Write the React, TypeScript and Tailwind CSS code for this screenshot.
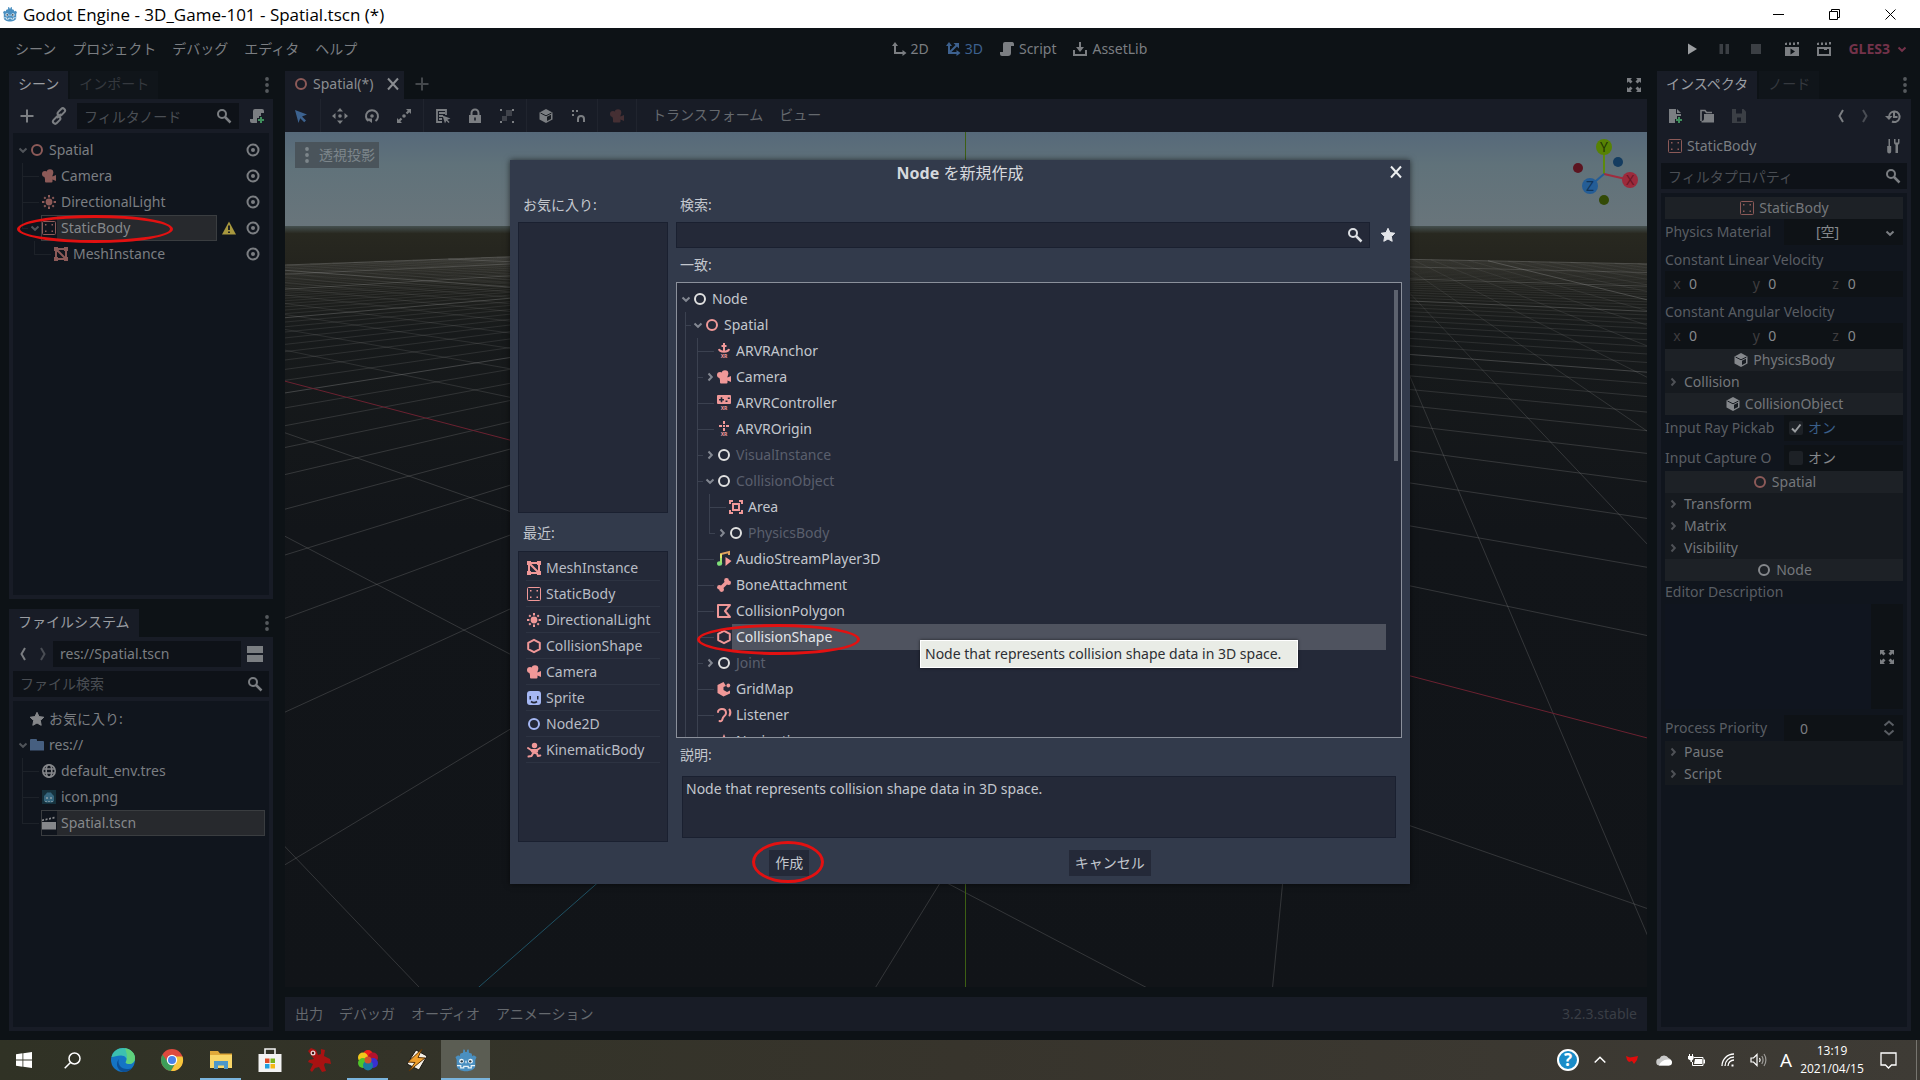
import React, { useState } from 'react';

// ================== Icons ==================
type IconProps = { name: string; className?: string; size?: number };

const glyphs: Record<string, React.ReactNode> = {
    ring: <circle cx="8" cy="8" r="5" fill="none" stroke="currentColor" strokeWidth="2" />,
    camera: (
        <g fill="currentColor">
            <circle cx="9" cy="4.5" r="3.3" />
            <circle cx="4" cy="6" r="3" />
            <path d="M2.5 6h9v2.6L15 7v6l-3.5-1.6v2.1a1 1 0 0 1-1 1H5a1 1 0 0 1-1-1V11z" />
        </g>
    ),
    light: (
        <g fill="currentColor" stroke="currentColor" strokeWidth="2">
            <circle cx="8" cy="8" r="2.4" />
            <path d="M8 1v2.4M8 12.6V15M1 8h2.4M12.6 8H15M3.2 3.2l1.4 1.4M11.4 11.4l1.4 1.4M3.2 12.8l1.4-1.4M11.4 4.6l1.4-1.4" />
        </g>
    ),
    staticbody: (
        <g fill="currentColor">
            <rect x="1.5" y="1.5" width="13" height="13" rx="1" fill="none" stroke="currentColor" />
            <path d="M4 4h1.5v1.5H4zM10.5 4H12v1.5h-1.5zM4 10.5h1.5V12H4zM10.5 10.5H12V12h-1.5z" />
        </g>
    ),
    mesh: (
        <g fill="none" stroke="currentColor">
            <path d="M3 3h10v10H3zM3 3l10 10" strokeWidth="2" />
            <path d="M1 1h4v4H1zM11 1h4v4h-4zM1 11h4v4H1zM11 11h4v4h-4z" fill="currentColor" stroke="none" />
        </g>
    ),
    hexagon: <path d="M8 1.8l5.8 3.1v6.2L8 14.2l-5.8-3.1V4.9z" fill="none" stroke="currentColor" strokeWidth="2" strokeLinejoin="round" />,
    sprite: (
        <g>
            <rect x="1" y="1" width="14" height="14" rx="3" fill="currentColor" />
            <path d="M3.5 6H5v3.5H3.5zM11 6h1.5v3.5H11z" fill="#242938" />
            <path d="M5 11.5c2 1.5 4 1.5 6 0" fill="none" stroke="#242938" strokeWidth="1.6" />
        </g>
    ),
    kinematic: (
        <g fill="none" stroke="currentColor" strokeWidth="2" strokeLinecap="round" strokeLinejoin="round">
            <circle cx="8.5" cy="3.5" r="2.7" fill="currentColor" stroke="none" />
            <path d="M2 6l3 2h6l3-2M2.5 14.5l3-.5 2-3.5 3.5 1 .8 2.5 2.5-.5" />
            <path d="M6.5 9h4" strokeWidth="3.5" />
        </g>
    ),
    anchor: <path d="M8 0v9M5.500 3h5M3 6c.5 3.500 9.500 3.500 10 0" fill="none" stroke="currentColor" strokeWidth="2" />,
    pad: (
        <g>
            <rect x="1" y="0" width="14" height="9" rx="1" fill="currentColor" />
            <path d="M3 4h5v1.5H3zM4.7 2.3h1.6v5H4.7zM9.5 5.5h2V7h-2zM11.8 2.5h2V4h-2z" fill="#242938" />
        </g>
    ),
    origin: <path d="M8 0v3M8 7v3M3 5h3M10 5h3M7 5h2" fill="none" stroke="currentColor" strokeWidth="2" />,
    area: (
        <g fill="none" stroke="currentColor" strokeWidth="2">
            <path d="M5 5h6v6H5z" />
            <path d="M2 5V2h3M11 2h3v3M14 11v3h-3M5 14H2v-3" />
        </g>
    ),
    audio: (
        <g>
            <path d="M5 12V3l8-2v3" fill="none" stroke="#e0a15e" strokeWidth="2" />
            <path d="M5 7V3" stroke="#e2e06a" strokeWidth="2" />
            <ellipse cx="3.6" cy="12.5" rx="2.6" ry="2.3" fill="#7fe07a" />
            <path d="M5 7v5" stroke="#9fe070" strokeWidth="2" />
            <path d="M9.5 6l6 4-6 5z" fill="#fc9c9c" />
        </g>
    ),
    bone: (
        <g fill="currentColor">
            <circle cx="10.5" cy="3.5" r="2.4" />
            <circle cx="12.7" cy="5.8" r="2.3" />
            <circle cx="3.4" cy="10.2" r="2.3" />
            <circle cx="5.6" cy="12.6" r="2.4" />
            <path d="M4 12l8-8" stroke="currentColor" strokeWidth="3.6" />
        </g>
    ),
    polygon: <path d="M2 2h12L9 8l5 6H2z" fill="none" stroke="currentColor" strokeWidth="2" strokeLinejoin="round" />,
    gridmap: (
        <g fill="currentColor">
            <path d="M7.5 1l-6 3v8l6 3.5 6.5-3v-3L11 11 7.5 9V6L10 5z" />
            <circle cx="12.3" cy="4.5" r="1.9" />
        </g>
    ),
    listener: (
        <g fill="none" stroke="currentColor" strokeWidth="2" strokeLinecap="round">
            <path d="M2 5c0-4 8-4.500 8 1 0 3-3 3-3.500 6-.3 2-1.500 2.500-3 2" />
            <path d="M13.5 2.5c1.200 2 1.200 4 0 6" />
        </g>
    ),
    nav: <path d="M8 1l6 14-6-3-6 3z" fill="currentColor" />,
    cube: (
        <g>
            <path d="M8 1l6.500 3.400v7.200L8 15l-6.500-3.400V4.400z" fill="currentColor" />
            <path d="M9 8.800l4-2.100v4.300l-4 2.100z" fill="#181c22" />
            <path d="M2.5 5L8 7.800 13.500 5" fill="none" stroke="#181c22" />
        </g>
    ),
    search: (
        <g fill="none" stroke="currentColor">
            <circle cx="6" cy="6" r="4" strokeWidth="2" />
            <path d="M9 9l5.5 5.5" strokeWidth="2.5" />
        </g>
    ),
    star: <path d="M8 1.300l2 4.300 4.800.6-3.500 3.300.9 4.800L8 12l-4.200 2.300.9-4.800L1.200 6.200 6 5.600z" fill="currentColor" stroke="currentColor" strokeLinejoin="round" />,
    plus: <path d="M8 1.5v13M1.5 8h13" stroke="currentColor" strokeWidth="2" />,
    cross: <path d="M3 2.5l10 11M13 2.5l-10 11" stroke="currentColor" strokeWidth="2" />,
    link: (
        <g fill="none" stroke="currentColor" strokeWidth="2">
            <rect x="8" y="-.5" width="4.5" height="8.5" rx="2.2" transform="rotate(45 10 4)" />
            <rect x="3.5" y="8" width="4.5" height="8.5" rx="2.2" transform="rotate(45 6 12)" />
            <path d="M6 10l4-4" />
        </g>
    ),
    script: <path d="M6 1h7.500A2 2 0 0 1 15 3v2h-3v7a3 3 0 0 1-3 3H3a2 2 0 0 1-2-2v-2h3V3a2 2 0 0 1 2-2z" fill="currentColor" />,
    scriptadd: (
        <g>
            <path d="M6 1h7a2 2 0 0 1 2 2v2h-3v3h-2v2H8v5H3a2 2 0 0 1-2-2v-2h3V3a2 2 0 0 1 2-2z" fill="currentColor" />
            <path d="M12 9v6M9 12h6" stroke="#3f8f5c" strokeWidth="2" />
        </g>
    ),
    eye: (
        <g fill="none" stroke="currentColor">
            <circle cx="8" cy="8" r="5.5" strokeWidth="2" />
            <circle cx="8" cy="8" r="2" fill="currentColor" stroke="none" />
        </g>
    ),
    warning: (
        <g>
            <path d="M8 1.5l7 13H1z" fill="#a8983e" />
            <path d="M8 5.500V10M8 11.500v1.600" stroke="#14181f" strokeWidth="1.800" />
        </g>
    ),
    down: <path d="M4.5 6.5L8 9.800l3.500-3.300" fill="none" stroke="currentColor" strokeWidth="2" />,
    right: <path d="M6.5 4.5L9.800 8l-3.300 3.500" fill="none" stroke="currentColor" strokeWidth="2" />,
    back: <path d="M10 2L6.500 8l3.500 6" fill="none" stroke="currentColor" strokeWidth="2" />,
    forward: <path d="M6 2l3.500 6L6 14" fill="none" stroke="currentColor" strokeWidth="2" />,
    updown: <path d="M3.500 5.500L8 1.500l4.500 4M3.500 10.500l4.500 4 4.500-4" fill="none" stroke="currentColor" strokeWidth="2" />,
    split: <path d="M0 0h16v7H0zM0 9h16v7H0z" fill="currentColor" />,
    folder: <path d="M1 3a1 1 0 0 1 1-1h5a1 1 0 0 1 1 1v1h6a1 1 0 0 1 1 1v8.500H1z" fill="currentColor" />,
    globe: (
        <g fill="none" stroke="currentColor" strokeWidth="1.6">
            <circle cx="8" cy="8" r="6.2" />
            <ellipse cx="8" cy="8" rx="2.8" ry="6.2" />
            <path d="M2 6h12M2 10h12" />
        </g>
    ),
    clapper: (
        <g fill="currentColor">
            <path d="M1 7h14v7.500H1z" />
            <path d="M1 4.500l2-.5v1.800l-2 .4zM4.500 3.700l2-.4v1.800l-2 .4zM8 2.900l2-.4v1.800l-2 .4zM11.500 2.100l2-.4v1.800l-2 .4z" />
        </g>
    ),
    playscene: (
        <g>
            <path d="M1 2l2-.5V4H1zM5 1.500h2V4H5zM9 1.500h2V4H9zM13 1h2v2.500h-2zM1 6h14v9H1z" fill="currentColor" />
            <path d="M6.500 7.500v6l4.500-3z" fill="#0d1216" />
        </g>
    ),
    playcustom: (
        <g>
            <path d="M1 2l2-.5V4H1zM5 1.500h2V4H5zM9 1.500h2V4H9zM13 1h2v2.500h-2z" fill="currentColor" />
            <path d="M2 7h12v7H2z" fill="none" stroke="currentColor" strokeWidth="2" />
            <path d="M8 7h3v2H8z" fill="currentColor" />
        </g>
    ),
    twod: (
        <g fill="none" stroke="currentColor" strokeWidth="2">
            <path d="M4 4v8h9" />
            <path d="M1 5l3-4 3 4zM11.500 9l4 3-4 3z" fill="currentColor" stroke="none" />
        </g>
    ),
    threed: (
        <g fill="none" stroke="currentColor" strokeWidth="2">
            <path d="M4 4v8h9M4 12l8-8" />
            <path d="M1 5l3-4 3 4zM11.500 9l4 3-4 3zM8.500 2H14v5.500z" fill="currentColor" stroke="none" />
        </g>
    ),
    assetlib: (
        <g fill="none" stroke="currentColor" strokeWidth="2">
            <path d="M2 9v5h12V9M8 1v6" />
            <path d="M4 6h8l-4 5z" fill="currentColor" stroke="none" />
        </g>
    ),
    play: <path d="M4 2.500v11l9-5.500z" fill="currentColor" />,
    pause: <path d="M3.500 3H7v10H3.500zM9.500 3H13v10H9.500z" fill="currentColor" />,
    stop: <path d="M3 3h10v10H3z" fill="currentColor" />,
    select: <path d="M2 2l12 4.500-5 2 4 4-1.800 1.800-4-4L5.500 15z" fill="currentColor" />,
    move: (
        <g fill="currentColor">
            <circle cx="8" cy="8" r="1.8" />
            <path d="M8 0l3 3.500H5zM8 16l3-3.500H5zM0 8l3.500-3v6zM16 8l-3.500-3v6z" />
        </g>
    ),
    rotate: (
        <g fill="none" stroke="currentColor" strokeWidth="2">
            <path d="M4.500 13A6 6 0 1 1 11.500 13" />
            <circle cx="8" cy="8" r="1.8" fill="currentColor" stroke="none" />
            <path d="M1.500 10.500H8V15z" fill="currentColor" stroke="none" />
        </g>
    ),
    scale: (
        <g fill="currentColor">
            <circle cx="8" cy="8" r="1.8" />
            <path d="M10 1h5v5l-1.700-1.700-2 2-1.600-1.600 2-2zM6 15H1v-5l1.700 1.700 2-2 1.600 1.600-2 2z" />
        </g>
    ),
    listselect: (
        <g fill="none" stroke="currentColor" strokeWidth="1.8">
            <path d="M11 7V2H2v12h5M4 5h6M4 8h4M4 11h3" />
            <path d="M7.500 7.500l8 3-3.200 1.300 2.300 2.300-1 1-2.300-2.300L10 15.500z" fill="currentColor" stroke="none" />
        </g>
    ),
    lock: (
        <g>
            <path d="M4.500 8V5a3.500 3.500 0 0 1 7 0v3" fill="none" stroke="currentColor" strokeWidth="2" />
            <path d="M2 7h12v8H2z" fill="currentColor" />
            <path d="M7.200 9.500h1.600v3H7.200z" fill="#181c26" />
        </g>
    ),
    group: (
        <g fill="currentColor">
            <path d="M1 1h2v2H1zM13 1h2v2h-2zM1 13h2v2H1zM13 13h2v2h-2z" />
            <path d="M7 2h6v6H7zM3 8h5v5H3z" opacity=".4" />
        </g>
    ),
    snap: (
        <g fill="currentColor">
            <path d="M2 2h2v2H2zM2 6h2v2H2zM6 2h2v2H6z" />
            <path d="M8 14v-3a3 3 0 0 1 6 0v3" fill="none" stroke="currentColor" strokeWidth="2" />
        </g>
    ),
    expand: (
        <path d="M1 1h5L4.500 2.500l2 2-2 2-2-2L1 6zM15 1h-5l1.500 1.500-2 2 2 2 2-2L15 6zM1 15h5l-1.500-1.500 2-2-2-2-2 2L1 10zM15 15h-5l1.500-1.500-2-2 2-2 2 2L15 10z" fill="currentColor" />
    ),
    newfile: (
        <g>
            <path d="M2 1h7v5h5v2h-4v3H8v4H2zM10 1l4 4h-4z" fill="currentColor" />
            <path d="M12 9v6M9 12h6" stroke="#3f8f5c" strokeWidth="2" />
        </g>
    ),
    open: (
        <g>
            <path d="M2 13V2.500h4l1.500 2H13" fill="none" stroke="currentColor" strokeWidth="1.6" />
            <path d="M5 6h10v8.500H2.500V13C4.500 13 5 12 5 10z" fill="currentColor" />
        </g>
    ),
    save: (
        <g>
            <path d="M1 1h11.500L15 3.500V15H1z" fill="currentColor" />
            <path d="M5 1h6v4.500H5zM6 9.500h4v4H6z" fill="#181c26" />
        </g>
    ),
    history: (
        <g fill="none" stroke="currentColor" strokeWidth="2">
            <path d="M4 9a5.300 5.300 0 1 1 3 4.500M9 4.500V9h3.500" />
            <path d="M0 8h7.500L4 12z" fill="currentColor" stroke="none" />
        </g>
    ),
    tools: (
        <g fill="currentColor">
            <path d="M3.500 1H5v7h1.200v5.500a1.800 1.800 0 0 1-4 0V8h1.300z" />
            <path d="M9 1v3.500a2.500 2.500 0 0 0 1.500 2.300V15H13V6.800a2.500 2.500 0 0 0 1.500-2.300V1H13v3.500h-2.500V1z" />
        </g>
    ),
    kebab: (
        <g fill="currentColor">
            <circle cx="8" cy="2" r="1.9" />
            <circle cx="8" cy="8" r="1.9" />
            <circle cx="8" cy="14" r="1.9" />
        </g>
    ),
    godot: (
        <g>
            <path d="M1 6l1.800-1.200.9.700.6-1.800L6 3.200 6.200 1l1 .2.300 1.400h1l.3-1.400 1-.2.200 2.200 1.700.5.600 1.800.9-.7L15 6l-.8 2v4c0 2-3 3.500-6.200 3.500S1.800 14 1.800 12V8z" fill="#4a8fc0" />
            <circle cx="5" cy="8.800" r="1.600" fill="#e8f2f8" />
            <circle cx="11" cy="8.800" r="1.600" fill="#e8f2f8" />
            <circle cx="5.200" cy="8.900" r=".8" fill="#2c3a46" />
            <circle cx="10.800" cy="8.900" r=".8" fill="#2c3a46" />
            <path d="M2 11.800h2.500v1.400h2v-1h3v1h2v-1.400H14M8 8.500v1.600" fill="none" stroke="#e8f2f8" strokeWidth=".8" />
        </g>
    ),
    image: (
        <g>
            <path d="M1 1h14v14H1z" fill="#16313c" />
            <path d="M3 7l2-2 1-1.500h4L11 5l2 2v5l-2 1.500H5L3 12z" fill="#35667e" />
            <path d="M5 8h2v2H5zM9 8h2v2H9zM4 12h2v1H4zM7 12h2v1H7zM10 12h2v1h-2z" fill="#76909c" />
        </g>
    ),
};

const Icon = ({ name, className = '', size = 16 }: IconProps) => (
    <svg viewBox="0 0 16 16" width={size} height={size} className={`shrink-0 overflow-visible ${className}`} aria-hidden="true">
        {glyphs[name]}
        {['anchor', 'pad', 'origin'].includes(name) && (
            <text x="8" y="15" textAnchor="middle" fontSize="5" fontWeight="bold" fill="currentColor">XR</text>
        )}
    </svg>
);

const IconButton = ({ name, label, className = '' }: { name: string; label: string; className?: string }) => (
    <button type="button" aria-label={label} className={`flex h-full shrink-0 items-center justify-center ${className}`}>
        <Icon name={name} />
    </button>
);

// ================== Tree ==================
// guides: one letter per level, "|" = pass through, "t" = branch, "l" = last branch, "." = nothing
type Row = {
    label: string;
    icon: string;
    color?: string;
    guides?: string;
    arrow?: 'down' | 'right';
    muted?: boolean;
    warning?: boolean;
    circled?: string;
};

type TreeRowProps = Row & {
    line: string;
    selected?: boolean;
    outline?: string;
    highlight: string;
    onSelect: () => void;
    children?: React.ReactNode;
};

const TreeRow = ({ label, icon, color = '', guides = '', arrow, muted, circled, line, selected, outline = '', highlight, onSelect, children }: TreeRowProps) => (
    <li className="relative flex h-[26px] items-center">
        {guides.split('').map((g, i) => (
            <span key={i} className="relative h-full w-3 shrink-0">
                {g !== '.' && <span className={`absolute left-[5px] top-0 w-px ${line} ${g === 'l' ? 'h-1/2' : 'h-full'}`} />}
                {(g === 't' || g === 'l') && <span className={`absolute left-[5px] top-1/2 h-px ${line} ${arrow ? 'w-[6px]' : 'w-[17px]'}`} />}
            </span>
        ))}
        <span className="flex w-3 shrink-0 justify-center opacity-60">{arrow && <Icon name={arrow} />}</span>
        <button type="button" onClick={onSelect} className={`flex h-full min-w-0 flex-1 items-center text-left ${selected ? outline : ''}`}>
            <Icon name={icon} className={color} />
            <span className={`flex h-full flex-1 items-center whitespace-nowrap pl-1 ${muted ? 'text-[#5a5f6d]' : ''} ${selected ? highlight : ''}`}>{label}</span>
        </button>
        {children}
        {circled && <span className={`pointer-events-none absolute z-10 rounded-[50%] border-[3px] border-[#e31111] ${circled}`} />}
    </li>
);

const dockRow = {
    line: 'bg-[#1d2229]',
    outline: 'outline -outline-offset-1 outline-[#3a3d40]',
    highlight: 'bg-[#27292d] text-[#85888b]',
};

const sceneRows: Row[] = [
    { label: 'Spatial', icon: 'ring', color: 'text-[#8c5a58]', arrow: 'down' },
    { label: 'Camera', icon: 'camera', color: 'text-[#8c5a58]', guides: 't' },
    { label: 'DirectionalLight', icon: 'light', color: 'text-[#8c5a58]', guides: 't' },
    { label: 'StaticBody', icon: 'staticbody', color: 'text-[#8c5a58]', guides: 'l', arrow: 'down', warning: true, circled: 'left-0 top-0 h-7 w-[156px]' },
    { label: 'MeshInstance', icon: 'mesh', color: 'text-[#8c5a58]', guides: '.l' },
];

const fileRows: Row[] = [
    { label: 'お気に入り:', icon: 'star', color: 'text-[#85878a]' },
    { label: 'res://', icon: 'folder', color: 'text-[#465f80]', arrow: 'down' },
    { label: 'default_env.tres', icon: 'globe', color: 'text-[#85878a]', guides: 't' },
    { label: 'icon.png', icon: 'image', guides: 't' },
    { label: 'Spatial.tscn', icon: 'clapper', color: 'text-[#85878a]', guides: 'l' },
];

const nodeRows: Row[] = [
    { label: 'Node', icon: 'ring', color: 'text-[#e0e0e0]', arrow: 'down' },
    { label: 'Spatial', icon: 'ring', arrow: 'down', guides: 't' },
    { label: 'ARVRAnchor', icon: 'anchor', guides: '|t' },
    { label: 'Camera', icon: 'camera', arrow: 'right', guides: '|t' },
    { label: 'ARVRController', icon: 'pad', guides: '|t' },
    { label: 'ARVROrigin', icon: 'origin', guides: '|t' },
    { label: 'VisualInstance', icon: 'ring', color: 'text-[#e0e0e0]', arrow: 'right', guides: '|t', muted: true },
    { label: 'CollisionObject', icon: 'ring', color: 'text-[#e0e0e0]', arrow: 'down', guides: '|t', muted: true },
    { label: 'Area', icon: 'area', guides: '||t' },
    { label: 'PhysicsBody', icon: 'ring', color: 'text-[#e0e0e0]', arrow: 'right', guides: '||l', muted: true },
    { label: 'AudioStreamPlayer3D', icon: 'audio', guides: '|t' },
    { label: 'BoneAttachment', icon: 'bone', guides: '|t' },
    { label: 'CollisionPolygon', icon: 'polygon', guides: '|t' },
    { label: 'CollisionShape', icon: 'hexagon', guides: '|t', circled: 'left-[17px] top-0 h-[31px] w-[163px]' },
    { label: 'Joint', icon: 'ring', color: 'text-[#e0e0e0]', arrow: 'right', guides: '|t', muted: true },
    { label: 'GridMap', icon: 'gridmap', guides: '|t' },
    { label: 'Listener', icon: 'listener', guides: '|t' },
    { label: 'Navigation', icon: 'nav', guides: '|t' },
];

const recentRows: Row[] = [
    { label: 'MeshInstance', icon: 'mesh' },
    { label: 'StaticBody', icon: 'staticbody' },
    { label: 'DirectionalLight', icon: 'light' },
    { label: 'CollisionShape', icon: 'hexagon' },
    { label: 'Camera', icon: 'camera' },
    { label: 'Sprite', icon: 'sprite', color: 'text-[#a5b7f3]' },
    { label: 'Node2D', icon: 'ring', color: 'text-[#a5b7f3]' },
    { label: 'KinematicBody', icon: 'kinematic' },
];

// ================== Window title ==================
const TitleBar = () => (
    <header className="flex h-7 shrink-0 items-center bg-white text-black">
        <Icon name="godot" className="ml-[2px]" />
        <h1 className="ml-[5px] flex-1 font-['Open_Sans','Noto_Sans',sans-serif] text-[17px] leading-none">Godot Engine - 3D_Game-101 - Spatial.tscn (*)</h1>
        <button type="button" aria-label="Minimize" className="flex h-full w-14 items-center justify-center">
            <svg width="11" height="11" viewBox="0 0 11 11"><path d="M0 5.5h11" stroke="#000" /></svg>
        </button>
        <button type="button" aria-label="Restore" className="flex h-full w-14 items-center justify-center">
            <svg width="11" height="11" viewBox="0 0 11 11"><path d="M.5 2.5h8v8h-8zM2.5 2.5v-2h8v8h-2" fill="none" stroke="#000" /></svg>
        </button>
        <button type="button" aria-label="Close" className="mr-0.5 flex h-full w-14 items-center justify-center">
            <svg width="11" height="11" viewBox="0 0 11 11"><path d="M.5.5l10 10M10.5.5l-10 10" stroke="#000" /></svg>
        </button>
    </header>
);

// ================== Menu bar ==================
const MenuBar = () => (
    <nav className="flex h-[43px] shrink-0 items-center justify-between pb-0.5 pl-[15px] pr-[10px]">
        <div className="flex gap-4">
            {['シーン', 'プロジェクト', 'デバッグ', 'エディタ', 'ヘルプ'].map((m) => (
                <button key={m} type="button">{m}</button>
            ))}
        </div>
        <div className="ml-1 flex gap-4">
            <button type="button" className="flex items-center gap-1"><Icon name="twod" />2D</button>
            <button type="button" className="flex items-center gap-1 text-[#3d618f]"><Icon name="threed" />3D</button>
            <button type="button" className="flex items-center gap-1"><Icon name="script" />Script</button>
            <button type="button" className="flex items-center gap-1"><Icon name="assetlib" />AssetLib</button>
        </div>
        <div className="flex h-full items-center">
            <IconButton name="play" label="Play" className="w-8 text-[#9b9ea1]" />
            <IconButton name="pause" label="Pause" className="w-8 text-[#3b3f44]" />
            <IconButton name="stop" label="Stop" className="w-8 text-[#3b3f44]" />
            <IconButton name="playscene" label="Play scene" className="ml-1 w-8" />
            <IconButton name="playcustom" label="Play custom scene" className="w-8" />
            <button type="button" className="ml-2 flex items-center gap-1 font-bold text-[#73324a]">
                GLES3<Icon name="down" />
            </button>
        </div>
    </nav>
);

const Tabs = ({ active, other }: { active: string; other?: string }) => (
    <div className="flex h-7 shrink-0 items-center">
        <button type="button" className="h-full bg-[#181c26] px-[9px] pb-0.5 text-[#9a9da2]">{active}</button>
        {other && <button type="button" className="ml-0.5 h-full bg-[#10151a] px-[9px] pb-0.5 text-[#35393f]">{other}</button>}
        <IconButton name="kebab" label="Dock menu" className="-mr-0.5 ml-auto text-[#55595d]" />
    </div>
);

const inputClass = 'h-[26px] w-full min-w-0 bg-[#0e1218] px-[7px] text-[#7b7e82] placeholder-[#4a4e54] outline-none';

// ================== Left docks ==================
const SceneDock = () => {
    const [selected, setSelected] = useState('StaticBody');
    return (
        <section className="flex min-h-0 flex-5 flex-col">
            <Tabs active="シーン" other="インポート" />
            <div className="flex min-h-0 flex-1 flex-col bg-[#181c26] px-1 pb-1">
                <div className="flex h-[34px] shrink-0 items-center">
                    <IconButton name="plus" label="Add node" className="w-7" />
                    <IconButton name="link" label="Instance scene" className="w-9" />
                    <label className="relative flex-1">
                        <input className={inputClass} placeholder="フィルタノード" aria-label="フィルタノード" />
                        <Icon name="search" className="absolute right-[7px] top-[5px]" />
                    </label>
                    <IconButton name="scriptadd" label="Attach script" className="ml-[6px] w-6" />
                </div>
                <ul className="flex-1 bg-[#10151d] p-1">
                    {sceneRows.map((r) => (
                        <TreeRow key={r.label} {...r} {...dockRow} selected={selected === r.label} onSelect={() => setSelected(r.label)}>
                            <span className="flex w-6 justify-center">{r.warning && <Icon name="warning" />}</span>
                            <button type="button" aria-label={`${r.label} visible`} className="flex w-6 justify-center"><Icon name="eye" /></button>
                        </TreeRow>
                    ))}
                </ul>
            </div>
        </section>
    );
};

const FileDock = () => {
    const [selected, setSelected] = useState('Spatial.tscn');
    return (
        <section className="mt-[10px] flex min-h-0 flex-4 flex-col">
            <Tabs active="ファイルシステム" />
            <div className="flex min-h-0 flex-1 flex-col bg-[#181c26] px-1 pb-1">
                <div className="flex h-[34px] shrink-0 items-center">
                    <IconButton name="back" label="Back" className="w-5" />
                    <IconButton name="forward" label="Forward" className="w-5 opacity-50" />
                    <input className={inputClass} defaultValue="res://Spatial.tscn" aria-label="Path" />
                    <IconButton name="split" label="Split mode" className="w-7" />
                </div>
                <label className="relative mb-1">
                    <input className={inputClass} placeholder="ファイル検索" aria-label="ファイル検索" />
                    <Icon name="search" className="absolute right-[6px] top-[5px]" />
                </label>
                <ul className="flex-1 bg-[#10151d] px-1 py-[5px]">
                    {fileRows.map((r) => (
                        <TreeRow key={r.label} {...r} {...dockRow} selected={selected === r.label} onSelect={() => setSelected(r.label)} />
                    ))}
                </ul>
            </div>
        </section>
    );
};

// ================== 3D viewport ==================
const VW = 1362;
const VH = 855;

// editor camera: 4 units from the origin, pitch and yaw of 0.5 rad, 70 degree fov
const sinA = Math.sin(0.5);
const cosA = Math.cos(0.5);
const depthOf = (x: number, z: number) => 4 - cosA * (sinA * x + cosA * z);
const project = (x: number, z: number) => {
    const d = depthOf(x, z);
    const k = VH / 2 / Math.tan((35 * Math.PI) / 180) / d;
    return `${(681 + k * (cosA * x - sinA * z)).toFixed(1)} ${(VH / 2 + k * sinA * (sinA * x + cosA * z)).toFixed(1)}`;
};

const floorLine = (x1: number, z1: number, x2: number, z2: number) => {
    const near = 0.1;
    let a = [x1, z1];
    let b = [x2, z2];
    const da = depthOf(x1, z1);
    const db = depthOf(x2, z2);
    if (da < near && db < near) return '';
    const t = (near - da) / (db - da);
    const cut = [x1 + (x2 - x1) * t, z1 + (z2 - z1) * t];
    if (da < near) a = cut;
    if (db < near) b = cut;
    return `M${project(a[0], a[1])}L${project(b[0], b[1])}`;
};

const EXTENT = 50;
let minorGrid = '';
let majorGrid = '';
for (let i = -EXTENT; i <= EXTENT; i++) {
    if (i === 0) continue;
    const pair = floorLine(i, -EXTENT, i, EXTENT) + floorLine(-EXTENT, i, EXTENT, i);
    if (i % 10 === 0) majorGrid += pair;
    else minorGrid += pair;
}

const Viewport = () => (
    <div className="relative min-h-0 flex-1 overflow-hidden">
        <svg className="absolute inset-0 h-full w-full" viewBox={`0 0 ${VW} ${VH}`} preserveAspectRatio="xMidYMid slice" aria-hidden="true">
            <defs>
                <linearGradient id="sky" x1="0" y1="0" x2="0" y2="1">
                    <stop offset="0" stopColor="#56697a" />
                    <stop offset=".35" stopColor="#60727a" />
                    <stop offset="1" stopColor="#69757b" />
                </linearGradient>
                <linearGradient id="ground" x1="0" y1="0" x2="0" y2="1">
                    <stop offset="0" stopColor="#45504f" />
                    <stop offset=".01" stopColor="#282820" />
                    <stop offset=".05" stopColor="#24241e" />
                    <stop offset=".14" stopColor="#171a1b" />
                    <stop offset=".4" stopColor="#121519" />
                    <stop offset="1" stopColor="#111418" />
                </linearGradient>
                <linearGradient id="grid" gradientUnits="userSpaceOnUse" x1="0" y1="120" x2="0" y2="320">
                    <stop offset="0" stopColor="#808080" stopOpacity=".12" />
                    <stop offset=".3" stopColor="#858585" stopOpacity=".17" />
                    <stop offset="1" stopColor="#8a8a8a" stopOpacity=".28" />
                </linearGradient>
            </defs>
            <rect width={VW} height="95" fill="url(#sky)" />
            <rect y="94" width={VW} height={VH - 94} fill="url(#ground)" />
            <path d={minorGrid} fill="none" stroke="url(#grid)" />
            <path d={majorGrid} fill="none" stroke="#a0a0a0" strokeOpacity=".32" />
            <path d={floorLine(-EXTENT, 0, EXTENT, 0)} stroke="#6b2130" />
            <path d={floorLine(0, -EXTENT, 0, EXTENT)} stroke="#1f5163" />
            <path d={`M680.5 0V${VH}`} stroke="#3d5f14" />
        </svg>
        <button type="button" className="absolute left-[10px] top-[10px] flex h-[26px] items-center bg-[#4a545b] px-1 text-[#7d868b]">
            <Icon name="kebab" className="mr-1" />透視投影
        </button>
        <svg className="absolute right-[3px] top-[3px]" width="80" height="80" viewBox="0 0 80 80" fontSize="14" textAnchor="middle">
            <path d="M40 39V14" stroke="#5c8a0c" strokeWidth="2" />
            <path d="M40 39l26 6" stroke="#a02c3e" strokeWidth="2" />
            <path d="M40 39L26 51" stroke="#245d96" strokeWidth="2" />
            <circle cx="14" cy="33" r="5" fill="#5c1420" />
            <circle cx="54" cy="27" r="5" fill="#143c60" />
            <circle cx="40" cy="65" r="5" fill="#334a06" />
            <circle cx="40" cy="12" r="8" fill="#578204" />
            <circle cx="66" cy="45" r="8" fill="#9c2a3c" />
            <circle cx="26" cy="51" r="8" fill="#245d96" />
            <text x="40" y="17" fill="#223804">Y</text>
            <text x="66" y="50" fill="#6b1624">X</text>
            <text x="26" y="56" fill="#103459">Z</text>
        </svg>
    </div>
);

const Divider = () => <span className="mx-[3px] h-full w-px shrink-0 bg-[#20242e]" />;

const Center = () => (
    <main className="mx-3 flex min-w-0 flex-1 flex-col">
        <div className="flex h-7 shrink-0 items-center">
            <div className="flex h-full items-center bg-[#181c26] pb-0.5 pl-2 pr-px text-[#8a8d91]">
                <button type="button" className="flex items-center gap-1"><Icon name="ring" className="text-[#8c5a58]" />Spatial(*)</button>
                <IconButton name="cross" label="Close tab" className="ml-[10px] w-5" />
            </div>
            <IconButton name="plus" label="New tab" className="ml-2 w-5 pb-0.5 text-[#44484c]" />
            <IconButton name="expand" label="Distraction free" className="ml-auto w-[26px]" />
        </div>
        <div className="flex h-[33px] shrink-0 items-center bg-[#181c26]">
            <IconButton name="select" label="Select" className="w-8 text-[#3c628f]" />
            <Divider />
            <IconButton name="move" label="Move" className="w-8" />
            <IconButton name="rotate" label="Rotate" className="w-8" />
            <IconButton name="scale" label="Scale" className="w-8" />
            <Divider />
            <IconButton name="listselect" label="List select" className="w-8" />
            <IconButton name="lock" label="Lock" className="w-8" />
            <IconButton name="group" label="Group" className="w-8" />
            <Divider />
            <IconButton name="cube" label="Local space" className="w-8" />
            <IconButton name="snap" label="Snap" className="w-8" />
            <Divider />
            <IconButton name="camera" label="Camera override" className="w-8 text-[#452f33]" />
            <Divider />
            <div className="flex gap-4 px-3 pb-0.5 text-[#65696e]">
                <button type="button">トランスフォーム</button>
                <button type="button">ビュー</button>
            </div>
        </div>
        <Viewport />
        <div className="mt-[10px] flex h-[34px] shrink-0 items-center gap-4 bg-[#181c26] px-[10px] text-[#65696e]">
            {['出力', 'デバッガ', 'オーディオ', 'アニメーション'].map((t) => (
                <button key={t} type="button">{t}</button>
            ))}
            <span className="ml-auto text-[#3a3e45]">3.2.3.stable</span>
        </div>
    </main>
);

// ================== Inspector ==================
const Category = ({ icon, label, color = '' }: { icon: string; label: string; color?: string }) => (
    <h3 className="flex h-[22px] items-center justify-center gap-1 bg-[#1d2126] text-[#74777b]"><Icon name={icon} className={color} />{label}</h3>
);

const Fold = ({ label }: { label: string }) => (
    <button type="button" className="flex h-[22px] w-full items-center bg-[#161a1f] text-[#74777b]">
        <Icon name="right" className="mr-[3px] opacity-60" />{label}
    </button>
);

const Vector = ({ label }: { label: string }) => (
    <fieldset>
        <legend className="h-[26px] leading-[30px] text-[#595d63]">{label}</legend>
        <div className="flex h-[26px] bg-[#0e1216]">
            {['x', 'y', 'z'].map((axis) => (
                <label key={axis} className="flex min-w-0 flex-1 items-center text-[#3f3d3f]">
                    <span className="w-6 shrink-0 text-center">{axis}</span>
                    <input className="w-full min-w-0 bg-transparent text-[#85888c] outline-none" defaultValue="0" />
                </label>
            ))}
        </div>
    </fieldset>
);

const Check = ({ label, on }: { label: string; on: boolean }) => {
    const [checked, setChecked] = useState(on);
    return (
        <label className="flex h-[26px] items-center">
            <span className="w-[119px] shrink-0 overflow-hidden whitespace-nowrap text-[#595d63]">{label}</span>
            <span className={`flex h-full flex-1 items-center bg-[#0e1216] pl-[5px] ${checked ? 'text-[#3a5f8a]' : 'text-[#85888c]'}`}>
                <span className="relative mr-[5px] h-[14px] w-[14px]">
                    <input type="checkbox" checked={checked} onChange={() => setChecked(!checked)} className="absolute inset-0 h-[14px] w-[14px] appearance-none rounded-xs bg-[#1d2126]" />
                    {checked && <svg className="absolute inset-0" width="14" height="14" viewBox="0 0 14 14"><path d="M3 7.5l3 3 5.5-7" fill="none" stroke="#9a9da0" strokeWidth="2" /></svg>}
                </span>
                オン
            </span>
        </label>
    );
};

const Inspector = () => (
    <aside className="-ml-[2px] flex w-[254px] shrink-0 flex-col">
        <Tabs active="インスペクタ" other="ノード" />
        <div className="flex min-h-0 flex-1 flex-col bg-[#181c26] px-1 pb-1">
            <div className="flex h-[34px] shrink-0 items-center">
                <IconButton name="newfile" label="New resource" className="w-7" />
                <IconButton name="open" label="Load resource" className="ml-[2px] w-8" />
                <IconButton name="save" label="Save resource" className="w-8 text-[#3b3f45]" />
                <IconButton name="back" label="Previous" className="ml-auto w-6" />
                <IconButton name="forward" label="Next" className="w-6 opacity-50" />
                <IconButton name="history" label="History" className="ml-1 mr-[2px] w-6" />
            </div>
            <div className="flex h-[30px] shrink-0 items-center px-[6px] pb-1">
                <Icon name="staticbody" className="mr-1 text-[#8c5a58]" />StaticBody
                <Icon name="tools" className="ml-auto" />
            </div>
            <label className="relative mb-1">
                <input className={inputClass} placeholder="フィルタプロパティ" aria-label="フィルタプロパティ" />
                <Icon name="search" className="absolute right-[6px] top-[5px]" />
            </label>
            <div className="flex-1 bg-[#10151d] p-1">
                <Category icon="staticbody" label="StaticBody" color="text-[#8c5a58]" />
                <label className="flex h-[26px] items-center text-[#595d63]">
                    <span className="w-[119px] shrink-0">Physics Material</span>
                    <span className="relative h-full flex-1 bg-[#0e1216]">
                        <select className="h-full w-full appearance-none pl-8 text-[#85888c] outline-none"><option>[空]</option></select>
                        <Icon name="down" className="pointer-events-none absolute right-[5px] top-[6px] text-[#7b7e82]" />
                    </span>
                </label>
                <Vector label="Constant Linear Velocity" />
                <Vector label="Constant Angular Velocity" />
                <Category icon="cube" label="PhysicsBody" color="text-[#85888c]" />
                <Fold label="Collision" />
                <Category icon="cube" label="CollisionObject" color="text-[#85888c]" />
                <Check label="Input Ray Pickab" on />
                <div className="h-1" />
                <Check label="Input Capture O" on={false} />
                <Category icon="ring" label="Spatial" color="text-[#8c5a58]" />
                <Fold label="Transform" />
                <Fold label="Matrix" />
                <Fold label="Visibility" />
                <Category icon="ring" label="Node" color="text-[#85888c]" />
                <label htmlFor="editor-description" className="block h-[23px] leading-[22px] text-[#595d63]">Editor Description</label>
                <div className="mb-[6px] flex h-[105px]">
                    <textarea id="editor-description" className="min-w-0 flex-1 resize-none bg-[#10151f] outline-none" />
                    <IconButton name="expand" label="Expand editor" className="w-8 bg-[#0e1216]" />
                </div>
                <label className="flex h-[26px] items-center text-[#595d63]">
                    <span className="w-[119px] shrink-0">Process Priority</span>
                    <span className="relative h-full flex-1 bg-[#0e1216]">
                        <input className="h-full w-full bg-transparent pl-4 text-[#7b7e82] outline-none" defaultValue="0" />
                        <Icon name="updown" className="pointer-events-none absolute right-[6px] top-[5px]" />
                    </span>
                </label>
                <Fold label="Pause" />
                <Fold label="Script" />
            </div>
        </div>
    </aside>
);

// ================== Create node dialog ==================
const CreateDialog = () => {
    const [selected, setSelected] = useState('CollisionShape');
    const [query, setQuery] = useState('');
    const box = 'border border-[#1a2030] bg-[#242938]';
    return (
        <div role="dialog" aria-label="Node を新規作成" className="absolute left-1/2 top-40 w-[900px] -translate-x-1/2 bg-[#323a4b] pb-2 text-[#c3c7ce] shadow-[0_0_6px_rgba(0,0,0,0.6)]">
            <div className="relative flex h-7 items-center justify-center pb-0.5">
                <h2 className="text-[16px] font-bold text-[#d5d8dd]">Node <span className="font-normal">を新規作成</span></h2>
                <IconButton name="cross" label="閉じる" className="absolute right-1 top-[-2px] w-5 text-[#eceef0]" />
            </div>
            <div className="flex gap-2 px-2">
                <div className="flex w-[150px] shrink-0 flex-col">
                    <h3 className="h-[34px] pl-[5px] leading-[34px]">お気に入り:</h3>
                    <div className={`flex-1 px-[7px] py-[3px] ${box}`} />
                    <h3 className="h-[38px] pl-[5px] leading-[40px]">最近:</h3>
                    <ul className={`flex-1 px-[7px] py-[3px] text-[#b9bdc5] ${box}`}>
                        {recentRows.map((r) => (
                            <li key={r.label} className="h-[26px] border-b border-[#2d3342]">
                                <button type="button" className="flex h-full w-full items-center gap-1 whitespace-nowrap">
                                    <Icon name={r.icon} className={r.color || 'text-[#f09898]'} />{r.label}
                                </button>
                            </li>
                        ))}
                    </ul>
                </div>
                <div className="min-w-0 flex-1 pb-1">
                    <label htmlFor="node-search" className="block h-[34px] pl-1 leading-[34px]">検索:</label>
                    <div className="flex items-center">
                        <div className="relative flex-1">
                            <input id="node-search" value={query} onChange={(e) => setQuery(e.target.value)} className={`block h-[26px] w-full px-2 outline-none ${box}`} />
                            <Icon name="search" className="absolute right-[7px] top-[5px] text-[#dcdfe3]" />
                        </div>
                        <IconButton name="star" label="お気に入り" className="w-8 pl-1 text-[#e4e6ea]" />
                    </div>
                    <h3 className="h-[34px] pl-1 leading-[34px]">一致:</h3>
                    <div className="relative h-[456px] overflow-hidden border border-[#8b909b] bg-[#242938]">
                        <ul className="py-[3px] pl-[3px] pr-[15px]">
                            {nodeRows.map((r) => (
                                <TreeRow key={r.label} {...r} color={r.color || 'text-[#f09898]'} line="bg-[#3b4150]" highlight="bg-white/20 text-[#e4e6ea]" selected={selected === r.label} onSelect={() => setSelected(r.label)} />
                            ))}
                        </ul>
                        <span className="absolute right-[3px] top-[7px] h-[171px] w-1 bg-[#5d626e]" />
                    </div>
                    <h3 className="h-[38px] pl-1 leading-[34px]">説明:</h3>
                    <p className={`mx-[6px] h-[62px] px-[3px] leading-6 ${box}`}>Node that represents collision shape data in 3D space.</p>
                </div>
            </div>
            <div className="mt-2 flex justify-evenly">
                <button type="button" className="relative h-[26px] bg-[#242938] px-[6px]">
                    作成
                    <span className="pointer-events-none absolute -left-[17px] -top-[9px] h-[42px] w-[72px] rounded-[50%] border-[3px] border-[#e31111]" />
                </button>
                <button type="button" className="h-[26px] bg-[#242938] px-[6px]">キャンセル</button>
            </div>
            <div role="tooltip" className="absolute left-[410px] top-[480px] min-w-[378px] whitespace-nowrap border border-white bg-[#e9ece6] px-1 leading-[26px] text-[#2d2f33] shadow-[0_0_3px_rgba(0,0,0,0.6)]">
                Node that represents collision shape data in 3D space.
            </div>
        </div>
    );
};

// ================== Taskbar ==================
const apps: { name: string; open?: boolean; art: React.ReactNode }[] = [
    {
        name: 'Edge',
        art: (
            <g>
                <circle cx="12" cy="12" r="12" fill="#1474c4" />
                <path d="M.5 9C2 3 7 0 12 0c7 0 12 5 12 10 0 4-3 6-6 6-2 0-4-1-3-2.500 2-3-1-6-5-6-4.500 0-8 2-9.500 1.500z" fill="#3cc0b0" />
                <path d="M14 .2c6 1 10 5 10 9.800 0 4-3 6-6 6-2 0-4-1-3-2.500 2-3 1-8-1-13.300z" fill="#5fd17c" />
                <path d="M8 11c-2 5 2 10 8 10 2 0 4-.5 5.500-1.500C19 23 15.500 24 12 24 6 22 4 15 8 11z" fill="#0c4f95" />
            </g>
        ),
    },
    {
        name: 'Chrome',
        art: (
            <g>
                <circle cx="12" cy="12" r="11" fill="#dd4a3e" />
                <path d="M2.500 6.500A11 11 0 0 0 11 23l5-9H8z" fill="#3d9d58" />
                <path d="M22.500 8.500A11 11 0 0 1 11 23l5.500-9.500L15 8.500z" fill="#f5c63c" />
                <circle cx="12" cy="12" r="5.200" fill="#fff" />
                <circle cx="12" cy="12" r="4" fill="#4a82e8" />
            </g>
        ),
    },
    {
        name: 'エクスプローラー',
        open: true,
        art: (
            <g>
                <path d="M1 3h8l2 2.500h12V20H1z" fill="#e0a93a" />
                <path d="M1 7h22v13H1z" fill="#f8d668" />
                <path d="M5 13h14v8h-4v-3.500H9V21H5z" fill="#4d97c9" />
            </g>
        ),
    },
    {
        name: 'Store',
        art: (
            <g>
                <path d="M7 7V1h10v6" fill="none" stroke="#f3f3f3" strokeWidth="1.6" />
                <path d="M.5 6h23v18H.5z" fill="#f3f3f3" />
                <path d="M7 10.500h4.500V15H7z" fill="#e04a27" />
                <path d="M12.500 10.500H17V15h-4.500z" fill="#7ab51d" />
                <path d="M7 16h4.500v4.500H7z" fill="#1fa0e0" />
                <path d="M12.500 16H17v4.500h-4.500z" fill="#f5b916" />
            </g>
        ),
    },
    {
        name: 'IrfanView',
        art: (
            <g>
                <path d="M1 3l3-3 5 2 2 5 3-1 0-5 4 1-1 6 6 3 1 5-6-1-1 2 2 6-4 1-3-5-4 1-3 4-2-2 3-6-5-2 1-2 5-1z" fill="#a81212" />
                <circle cx="6" cy="5" r="2.5" fill="#e9dada" />
                <circle cx="6" cy="5" r="1.2" fill="#401010" />
            </g>
        ),
    },
    {
        name: 'Color',
        open: true,
        art: (
            <g>
                <circle cx="12" cy="7" r="5" fill="#f0201a" />
                <circle cx="7" cy="9.5" r="5" fill="#f2c81c" />
                <circle cx="17" cy="9.5" r="5" fill="#b3122c" />
                <circle cx="7" cy="15" r="5" fill="#4fc42a" />
                <circle cx="17" cy="15" r="5" fill="#3a2fd0" />
                <circle cx="12" cy="17.5" r="5" fill="#1a7aa0" />
                <circle cx="12" cy="12" r="3.5" fill="#d0522c" />
            </g>
        ),
    },
    {
        name: 'Winamp',
        art: (
            <g>
                <path d="M11 2l11 6-8 14-12-6z" fill="#f5f0e6" stroke="#1a1712" />
                <path d="M17 1L3 14l7 .5L4 23l16-13-7-.5z" fill="#f0a02c" stroke="#5c3408" />
            </g>
        ),
    },
];

const Taskbar = () => (
    <footer className="flex h-10 shrink-0 items-stretch bg-linear-to-r from-[#303225] via-[#37342c] to-[#3e3b35] font-['Open_Sans','Noto_Sans',sans-serif] text-white">
        <button type="button" aria-label="Start" className="flex w-12 items-center justify-center">
            <svg width="16" height="16" viewBox="0 0 16 16"><path d="M0 2.200l6.500-.9v6.200H0zM7.300 1.200L16 0v7.500H7.300zM0 8.400h6.500v6.300L0 13.800zM7.300 8.400H16V16l-8.700-1.200z" fill="#fff" /></svg>
        </button>
        <button type="button" aria-label="Search" className="mr-[2px] flex w-12 items-center justify-center">
            <svg width="17" height="17" viewBox="0 0 17 17" fill="none" stroke="#fff" strokeWidth="1.5"><circle cx="10.5" cy="6.5" r="5.5" /><path d="M6.5 10.500L.7 16.300" /></svg>
        </button>
        {apps.map((a) => (
            <button key={a.name} type="button" aria-label={a.name} className="relative flex w-[49px] items-center justify-center">
                <svg width="24" height="24" viewBox="0 0 24 24">{a.art}</svg>
                {a.open && <span className="absolute bottom-0 left-1 right-1 h-[2px] bg-[#7ab4dc]" />}
            </button>
        ))}
        <button type="button" aria-label="Godot" className="relative flex w-[49px] items-center justify-center bg-[#5b5d53]">
            <Icon name="godot" size={24} />
            <span className="absolute inset-x-0 bottom-0 h-[2px] bg-[#7ab4dc]" />
        </button>
        <div className="ml-auto flex items-center">
            <span className="flex w-8 justify-center">
                <svg width="22" height="22" viewBox="0 0 22 22"><circle cx="11" cy="11" r="10" fill="#1a8cc8" stroke="#fff" strokeWidth="2" /><text x="11" y="17" textAnchor="middle" fontSize="17" fontWeight="bold" fill="#fff">?</text></svg>
            </span>
            <span className="flex w-8 justify-center"><svg width="12" height="8" viewBox="0 0 12 8"><path d="M.7 6.500L6 1.200l5.300 5.300" fill="none" stroke="#fff" strokeWidth="1.5" /></svg></span>
            <span className="flex w-8 justify-center"><svg width="14" height="10" viewBox="0 0 14 10"><path d="M1 1l4 1.500 3-.5 5-1-1 4-3 4-2-3-3 1-2-2z" fill="#e00c0c" /></svg></span>
            <span className="flex w-8 justify-center"><svg width="17" height="12" viewBox="0 0 17 12"><path d="M4 11.500a3.500 3.500 0 0 1-.5-7A5 5 0 0 1 12.500 4a4 4 0 0 1 .5 7.500z" fill="#c9c9c9" /><path d="M3 11.500c2-5 6-6 10-6a3 3 0 0 1 0 6z" fill="#fff" /></svg></span>
            <span className="flex w-8 justify-center"><svg width="17" height="13" viewBox="0 0 17 13"><path d="M5.500 3.500H15v8H4.500V8" fill="none" stroke="#fff" /><path d="M7 5h7v5H6zM15.500 5.500H17v4h-1.500zM0 2h1V0h1v2h2V0h1v2h.5v3L4 6.500V8H2.500V6.500L0 5z" fill="#fff" /></svg></span>
            <span className="flex w-8 justify-center"><svg width="14" height="14" viewBox="0 0 14 14" fill="none" stroke="#fff" strokeWidth="1.3"><path d="M1 13A12 12 0 0 1 13 1M4 13a9 9 0 0 1 9-9M7 13a6 6 0 0 1 6-6" /><path d="M10.500 11.500h2v2h-2z" fill="#fff" stroke="none" /></svg></span>
            <span className="flex w-7 justify-center"><svg width="17" height="14" viewBox="0 0 17 14" fill="none" stroke="#fff" strokeWidth="1.2"><path d="M1 5v4h2.500L7 12.500v-11L3.500 5zM9.500 5c.8 1.200.8 2.800 0 4" /><path d="M11.800 3c1.600 2.500 1.600 5.500 0 8M14 1c2.500 3.500 2.500 8.500 0 12" opacity=".5" /></svg></span>
            <span className="w-7 text-center text-[19px]">A</span>
            <time className="w-[64px] whitespace-nowrap text-center text-[12px] leading-[18px]">13:19<br />2021/04/15</time>
            <button type="button" aria-label="Notifications" className="flex w-12 justify-center"><svg width="17" height="17" viewBox="0 0 17 17"><path d="M1 1h15v12h-4.500L8.500 16l-3-3H1z" fill="none" stroke="#fff" strokeWidth="1.3" /></svg></button>
            <span className="ml-1 h-10 w-1 border-l border-[#77756f]" />
        </div>
    </footer>
);

const App: React.FC = () => (
    <div className="flex h-screen flex-col overflow-hidden bg-[#0d1216] font-['Noto_Sans','Noto_Sans_CJK_JP',sans-serif] text-[14px] leading-5 text-[#7b7e82]">
        <TitleBar />
        <MenuBar />
        <div className="flex min-h-0 flex-1 px-[9px] pb-[9px]">
            <div className="flex w-[264px] shrink-0 flex-col">
                <SceneDock />
                <FileDock />
            </div>
            <Center />
            <Inspector />
        </div>
        <Taskbar />
        <CreateDialog />
    </div>
);

export default App;
